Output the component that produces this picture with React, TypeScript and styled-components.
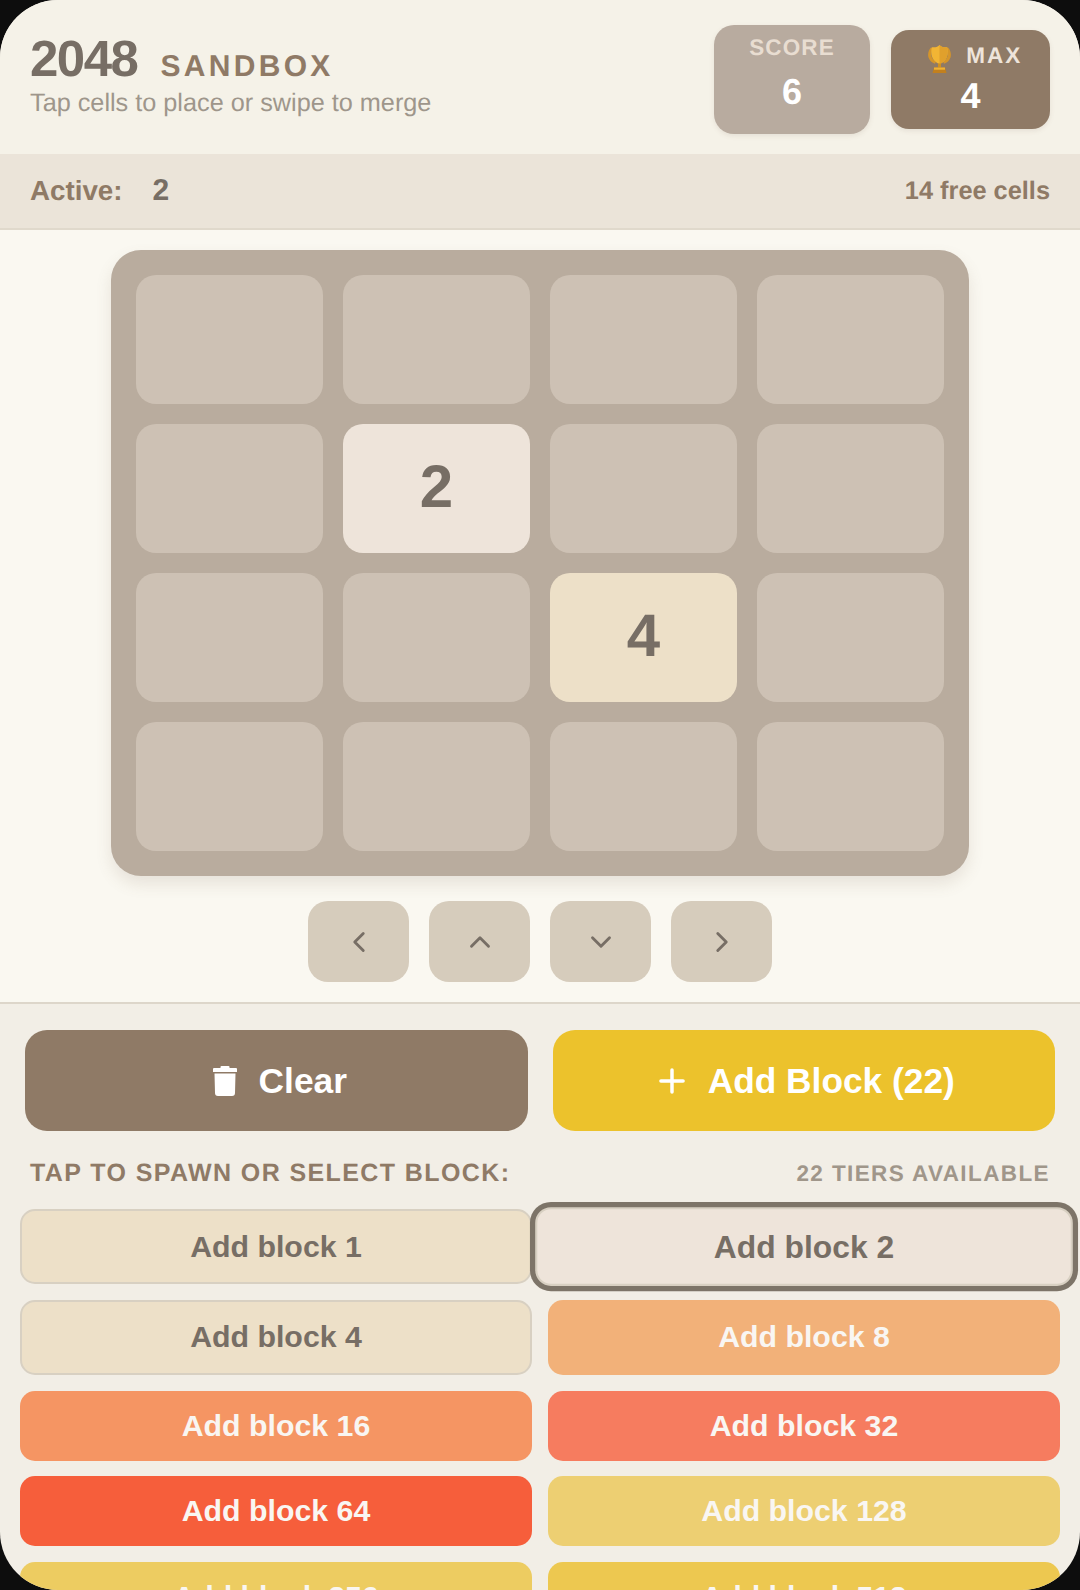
import React from 'react';
import styled, { createGlobalStyle } from 'styled-components';
import { ChevronLeft, ChevronUp, ChevronDown, ChevronRight, Plus } from 'lucide-react';

const GlobalStyle = createGlobalStyle`
  html, body {
    margin: 0;
    padding: 0;
    background: #0d0d0d;
  }
  body {
    text-rendering: geometricPrecision;
  }
  * {
    box-sizing: border-box;
  }
`;

const tiers = [
  { label: 1, bg: '#ede0c8', fg: '#776e65', border: true },
  { label: 2, bg: '#eee4da', fg: '#776e65', border: true, selected: true },
  { label: 4, bg: '#ede0c8', fg: '#776e65', border: true },
  { label: 8, bg: '#f2b179', fg: '#f9f6f2' },
  { label: 16, bg: '#f59563', fg: '#f9f6f2' },
  { label: 32, bg: '#f67c5f', fg: '#f9f6f2' },
  { label: 64, bg: '#f65e3b', fg: '#f9f6f2' },
  { label: 128, bg: '#edcf72', fg: '#f9f6f2' },
  { label: 256, bg: '#edcc61', fg: '#f9f6f2' },
  { label: 512, bg: '#edc850', fg: '#f9f6f2' },
];

const board = [
  [0, 0, 0, 0],
  [0, 2, 0, 0],
  [0, 0, 4, 0],
  [0, 0, 0, 0],
];

// gold trophy, stands in for the emoji
const Trophy = () => (
  <TrophyIcon width="23" height="28" viewBox="0 0 23 28">
    <path d="M3 2.500C.5 5-.5 9 .5 12.500c1 3 3.500 5.300 6.500 6.200l1-2.300C5.500 15.300 3.800 13.300 3.300 10.800 3 8.500 3.500 6 4.800 4z" fill="#d5952a" />
    <path d="M20 2.500c2.500 2.500 3.500 6.500 2.500 10-1 3-3.500 5.300-6.500 6.200l-1-2.300c2.500-1.100 4.200-3.100 4.700-5.600.3-2.300-.2-4.800-1.500-6.800z" fill="#d5952a" />
    <path d="M3.800 2.200C7.500 2.700 9.800 1.800 11.500 0c1.700 1.800 4 2.700 7.700 2.200.7 3.200.8 6.500-.2 9.500-1.100 3.300-3.700 5.700-7.500 7.500-3.800-1.800-6.400-4.200-7.500-7.500-1-3-.9-6.300-.2-9.500z" fill="#f2b534" />
    <path d="M11.500 0c1.700 1.800 4 2.700 7.700 2.200.7 3.200.8 6.500-.2 9.500-1.100 3.300-3.700 5.700-7.500 7.500z" fill="#e0a02c" />
    <rect x="10" y="18.500" width="3" height="4" fill="#d0901f" />
    <path d="M6 22.500h11l1.500 5.500H4.500z" fill="#c2801e" />
    <rect x="6" y="22.500" width="11" height="2.200" fill="#f0b233" />
  </TrophyIcon>
);

const Trash = () => (
  <svg width="24" height="30" viewBox="0 0 24 30">
    <path d="M8.500 0h7a1 1 0 0 1 1 1v1h6.500a1 1 0 0 1 1 1v3H0V3a1 1 0 0 1 1-1h6.500V1a1 1 0 0 1 1-1z" fill="#fff" />
    <path d="M1.500 7.500h21L22 27a3 3 0 0 1-3 3H5a3 3 0 0 1-3-3z" fill="#fff" />
  </svg>
);

const App = () => {
  return (
    <>
      <GlobalStyle />
      <Frame>
        <Header>
          <TitleBlock>
            <TitleRow>
              <Title>2048</Title>
              <Subtitle>SANDBOX</Subtitle>
            </TitleRow>
            <Hint>Tap cells to place or swipe to merge</Hint>
          </TitleBlock>
          <Scores>
            <ScoreBox>
              <ScoreLabel>SCORE</ScoreLabel>
              <ScoreValue>6</ScoreValue>
            </ScoreBox>
            <MaxBox>
              <MaxLabel>
                <Trophy />
                MAX
              </MaxLabel>
              <MaxValue>4</MaxValue>
            </MaxBox>
          </Scores>
        </Header>

        <StatusBar>
          <ActiveGroup>
            <ActiveLabel>Active:</ActiveLabel>
            <ActiveValue>2</ActiveValue>
          </ActiveGroup>
          <FreeCells>14 free cells</FreeCells>
        </StatusBar>

        <PlayArea>
          <Board>
            {board.flat().map((value, i) => (
              <Cell key={i} $value={value}>
                {value || ''}
              </Cell>
            ))}
          </Board>
          <Arrows>
            <ArrowButton><ChevronLeft size={34} strokeWidth={2} /></ArrowButton>
            <ArrowButton><ChevronUp size={34} strokeWidth={2} /></ArrowButton>
            <ArrowButton><ChevronDown size={34} strokeWidth={2} /></ArrowButton>
            <ArrowButton><ChevronRight size={34} strokeWidth={2} /></ArrowButton>
          </Arrows>
        </PlayArea>

        <Panel>
          <Actions>
            <ClearButton>
              <Trash />
              Clear
            </ClearButton>
            <AddButton>
              <Plus size={38} strokeWidth={2.2} />
              Add Block (22)
            </AddButton>
          </Actions>
          <PickerHead>
            <PickerTitle>TAP TO SPAWN OR SELECT BLOCK:</PickerTitle>
            <PickerCount>22 TIERS AVAILABLE</PickerCount>
          </PickerHead>
          <TierGrid>
            {tiers.map((t) => (
              <TierButton
                key={t.label}
                $bg={t.bg}
                $fg={t.fg}
                $border={!!t.border}
                $selected={!!t.selected}
              >
                Add block {t.label}
              </TierButton>
            ))}
          </TierGrid>
        </Panel>
      </Frame>
    </>
  );
};

const Frame = styled.div`
  width: 1080px;
  height: 1590px;
  border-radius: 58px;
  overflow: hidden;
  background: #f2eee6;
  font-family: 'Liberation Sans', Arial, sans-serif;
  display: flex;
  flex-direction: column;
`;

const Header = styled.header`
  height: 154px;
  flex: none;
  background: #f5f2e8;
  padding: 25px 30px 0;
  display: flex;
  justify-content: space-between;
  align-items: flex-start;
`;

const TitleBlock = styled.div`
  padding-top: 6px;
`;

const TitleRow = styled.div`
  display: flex;
  align-items: baseline;
  gap: 23px;
`;

const Title = styled.h1`
  margin: 0;
  font-size: 51px;
  line-height: 56px;
  font-weight: 700;
  letter-spacing: -1.500px;
  color: #776e65;
`;

const Subtitle = styled.span`
  font-size: 30px;
  font-weight: 700;
  letter-spacing: 3.300px;
  color: #8f7a66;
`;

const Hint = styled.p`
  margin: 1px 0 0;
  font-size: 25.250px;
  line-height: 30px;
  color: #9e968b;
`;

const Scores = styled.div`
  display: flex;
  align-items: center;
  gap: 21px;
  height: 109px;
`;

const ScoreBox = styled.div`
  width: 156px;
  height: 109px;
  border-radius: 20px;
  background: #b8ab9f;
  box-shadow: 0 2px 5px rgba(120, 100, 80, 0.12);
  text-align: center;
  padding-top: 9px;
`;

const ScoreLabel = styled.div`
  font-size: 22.5px;
  line-height: 28px;
  font-weight: 700;
  letter-spacing: 1.100px;
  color: #e8ddd1;
`;

const ScoreValue = styled.div`
  font-size: 36px;
  line-height: 40px;
  margin-top: 10px;
  font-weight: 700;
  color: #fff;
`;

const MaxBox = styled.div`
  width: 159px;
  height: 99px;
  border-radius: 18px;
  background: #8f7a66;
  box-shadow: 0 2px 5px rgba(120, 100, 80, 0.12);
  text-align: center;
  padding-top: 12px;
`;

const MaxLabel = styled.div`
  display: flex;
  align-items: center;
  justify-content: center;
  gap: 15.500px;
  height: 28px;
  padding-left: 9px;
  font-size: 22.5px;
  font-weight: 700;
  letter-spacing: 2px;
  color: #eee4da;
`;

const TrophyIcon = styled.svg`
  flex: none;
  margin-top: 5px;
`;

const MaxValue = styled.div`
  font-size: 36px;
  line-height: 40px;
  margin-top: 6px;
  font-weight: 700;
  color: #fff;
`;

const StatusBar = styled.div`
  height: 76px;
  flex: none;
  background: #ebe4d9;
  border-bottom: 2.500px solid #e0d9cc;
  padding: 0 30px;
  display: flex;
  align-items: center;
  justify-content: space-between;
`;

const ActiveGroup = styled.div`
  display: flex;
  align-items: center;
  gap: 30px;
`;

const ActiveLabel = styled.span`
  font-size: 27.750px;
  font-weight: 700;
  color: #8f7a66;
`;

const ActiveValue = styled.span`
  font-size: 30px;
  font-weight: 700;
  color: #776e65;
`;

const FreeCells = styled.span`
  font-size: 25.350px;
  font-weight: 700;
  color: #8f7a66;
`;

const PlayArea = styled.main`
  height: 774px;
  flex: none;
  background: #faf8f1;
  border-bottom: 2.500px solid #ddd6ca;
  padding-top: 20px;
  display: flex;
  flex-direction: column;
  align-items: center;
`;

const Board = styled.div`
  width: 858px;
  height: 626px;
  padding: 25px;
  border-radius: 30px;
  background: #b9ac9e;
  box-shadow: 0 8px 16px rgba(120, 100, 80, 0.14);
  display: grid;
  grid-template-columns: repeat(4, 1fr);
  grid-template-rows: repeat(4, 1fr);
  gap: 20px;
`;

const Cell = styled.div<{ $value: number }>`
  border-radius: 20px;
  background: ${(p) => (p.$value === 2 ? '#eee4da' : p.$value === 4 ? '#ede0c8' : '#cdc1b4')};
  color: #776e65;
  font-size: 60px;
  font-weight: 700;
  padding-bottom: 4px;
  display: flex;
  align-items: center;
  justify-content: center;
`;

const Arrows = styled.div`
  display: flex;
  gap: 20px;
  margin-top: 25px;
`;

const ArrowButton = styled.button`
  width: 101px;
  height: 81px;
  border: 0;
  border-radius: 20px;
  padding: 0;
  background: #d6ccbc;
  color: #776e65;
  display: flex;
  align-items: center;
  justify-content: center;
`;

const Panel = styled.section`
  flex: 1;
  min-height: 0;
  padding: 26px 20px 0;
`;

const Actions = styled.div`
  display: grid;
  grid-template-columns: 1fr 1fr;
  gap: 25px;
  padding: 0 5px;
`;

const ActionButton = styled.button`
  height: 101px;
  border: 0;
  border-radius: 22px;
  font-family: inherit;
  font-size: 35.300px;
  font-weight: 700;
  color: #fff;
  display: flex;
  align-items: center;
  justify-content: center;
`;

const ClearButton = styled(ActionButton)`
  gap: 22px;
  padding: 0 0 0 7px;
  background: #8f7a66;
`;

const AddButton = styled(ActionButton)`
  gap: 17px;
  padding: 0;
  background: #ecc22c;
`;

const PickerHead = styled.div`
  display: flex;
  align-items: center;
  justify-content: space-between;
  padding: 0 10px;
  margin-top: 27px;
  height: 30px;
`;

const PickerTitle = styled.span`
  font-size: 25px;
  font-weight: 700;
  letter-spacing: 1.400px;
  color: #8f7a66;
`;

const PickerCount = styled.span`
  font-size: 22.5px;
  font-weight: 700;
  letter-spacing: 1.400px;
  margin-top: 2px;
  color: #a0968a;
`;

const TierGrid = styled.div`
  display: grid;
  grid-template-columns: 512px 512px;
  justify-content: space-between;
  gap: 15.800px 16px;
  margin-top: 21px;
`;

const TierButton = styled.button<{ $bg: string; $fg: string; $border: boolean; $selected: boolean }>`
  min-height: 70px;
  height: ${(p) => (p.$border ? '75px' : 'auto')};
  border: ${(p) => (p.$border ? '2.500px solid #d8d0c2' : '0')};
  border-radius: 15px;
  padding: 0;
  background: ${(p) => p.$bg};
  color: ${(p) => p.$fg};
  font-family: inherit;
  font-size: 30.300px;
  font-weight: 700;
  ${(p) =>
    p.$selected &&
    `
    transform: scale(1.05);
    box-shadow: 0 0 0 5px #7d7468;
    position: relative;
  `}
`;

export default App;
